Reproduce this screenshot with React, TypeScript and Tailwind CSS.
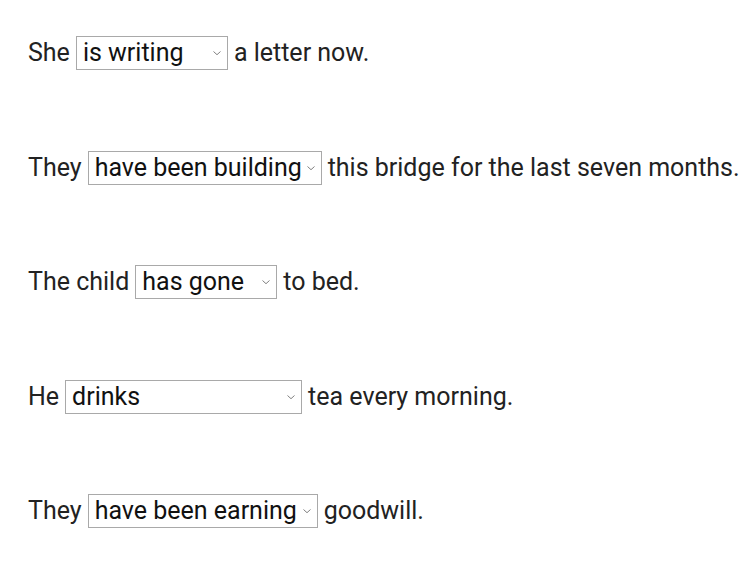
import { useState } from 'react';

type Item = { before: string; after: string; options: string[]; value: string; width: string };

const items: Item[] = [
  { before: 'She', after: 'a letter now.', options: ['writes', 'is writing', 'has written'], value: 'is writing', width: 'w-[152px]' },
  { before: 'They', after: 'this bridge for the last seven months.', options: ['build', 'are building', 'have been building'], value: 'have been building', width: 'w-[234px]' },
  { before: 'The child', after: 'to bed.', options: ['goes', 'is going', 'has gone'], value: 'has gone', width: 'w-[142px]' },
  { before: 'He', after: 'tea every morning.', options: ['drinks', 'is drinking', 'has been drinking'], value: 'drinks', width: 'w-[237px]' },
  { before: 'They', after: 'goodwill.', options: ['earn', 'are earning', 'have been earning'], value: 'have been earning', width: 'w-[230px]' },
];

function Dropdown({ item }: { item: Item }) {
  const [value, setValue] = useState(item.value);
  return (
    <span className={`relative inline-block align-middle mx-[6px] ${item.width}`}>
      <select
        value={value}
        onChange={(e) => setValue(e.target.value)}
        className="appearance-none w-full h-[34px] border border-[#a9a9a9] bg-white pl-[6px] pr-5 text-[25px] text-[#111] leading-[32px] outline-none"
      >
        {item.options.map((o) => (
          <option key={o} value={o}>{o}</option>
        ))}
      </select>
      {/* chevron */}
      <svg
        className="pointer-events-none absolute right-[7px] top-1/2 -translate-y-1/2"
        width="8"
        height="5"
        viewBox="0 0 8 5"
      >
        <polyline points="0.5,1 4,4.2 7.5,1" fill="none" stroke="#808080" strokeWidth="1" />
      </svg>
    </span>
  );
}

export default function App() {
  return (
    <div className="min-h-screen bg-white pl-[28px] pt-[36px] font-['Roboto',sans-serif] text-[25px] text-[#222]">
      <div className="flex flex-col gap-[80.5px]">
        {items.map((item, i) => (
          <div key={i} className="h-[34px] flex items-center whitespace-nowrap">
            <span>{item.before}</span>
            <Dropdown item={item} />
            <span>{item.after}</span>
          </div>
        ))}
      </div>
    </div>
  );
}
